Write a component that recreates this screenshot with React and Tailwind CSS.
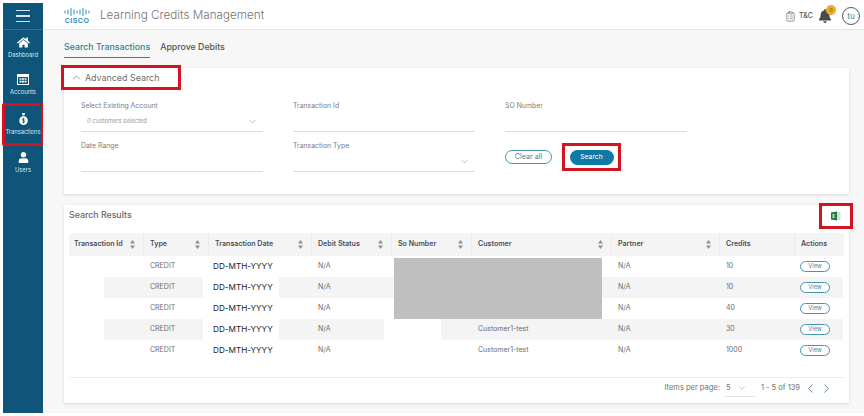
import React from "react";
import { FaHome, FaUser, FaBell } from "react-icons/fa";
import { ChevronDown, ChevronUp, ChevronLeft, ChevronRight, ClipboardList } from "lucide-react";

const Sort = () => (
  <svg width="5" height="9" viewBox="0 0 5 9" className="shrink-0 fill-[#8a9299]">
    <path d="M2.5 0 5 3.5H0z" />
    <path d="M2.5 9 0 5.5h5z" />
  </svg>
);

const CalendarIcon = () => (
  <svg width="12" height="11" viewBox="0 0 12 11" className="fill-white">
    <path d="M0 0h12v11H0z" />
    <path fill="#0e5579" d="M1 3h10v7H1z" />
    <path d="M2.5 4.2h2v1.6h-2zM5 4.2h2v1.6H5zM7.5 4.2h2v1.6h-2zM2.5 6.8h2v1.6h-2zM5 6.8h2v1.6H5zM7.5 6.8h2v1.6h-2z" />
  </svg>
);

const BagIcon = () => (
  <svg width="9" height="12" viewBox="0 0 9 12" className="fill-white">
    <path d="M3 0h3L5.400 2.200H3.600z" />
    <path d="M3.400 2.700h2.200v.7H3.400z" />
    <circle cx="4.500" cy="7.600" r="4.300" />
    <path fill="none" stroke="#0e5579" strokeWidth=".8" d="M5.800 6.200c-.5-.7-2.500-.8-2.500.3 0 1.200 2.500.7 2.500 2 0 1.100-2 1-2.600.3M4.500 4.800v5.500" />
  </svg>
);

const NavItem = ({ icon, label, active }) => (
  <div className={`flex flex-col items-center justify-center gap-[3px] ${active ? "-mx-[1px] -mb-[2px] h-[43px] w-[42px] shrink-0 border-[3px] border-[#d3131f] rounded-[2px]" : "h-[37px]"}`}>
    <div className="h-[12px] flex items-center justify-center">{icon}</div>
    <span className="text-[5.800px] leading-[8px] text-[#dbe6ec] whitespace-nowrap">{label}</span>
  </div>
);

const Field = ({ label, value, chevron }) => (
  <div className="w-[182px] h-[31px] flex flex-col">
    <span className="text-[6.900px] leading-[10px] text-[#7d7d7d]">{label}</span>
    <div className="mt-auto h-[21px] border-b border-[#dedede] flex items-center justify-between pl-[6px] pr-[5px]">
      <span className="text-[5.900px] italic text-[#9b9b9b]">{value}</span>
      {chevron && <ChevronDown size={11} strokeWidth={1} className="text-[#777]" />}
    </div>
  </div>
);

const cols = "grid grid-cols-[75px_65px_103px_80px_80px_140px_108px_75px_48px]";

const Head = ({ label, sort = true, first }) => (
  <div className={`flex items-center justify-between ${first ? "pl-[5px]" : "pl-[6px]"} pr-[8px] border-r border-[#eaeaea] last:border-r-0 text-[7.100px] font-semibold text-[#4a4f55] whitespace-nowrap`}>
    <span>{label}</span>
    {sort && <Sort />}
  </div>
);

const rows = [
  { credits: "10", customer: "" },
  { credits: "10", customer: "" },
  { credits: "40", customer: "" },
  { credits: "30", customer: "Customer1-test" },
  { credits: "1000", customer: "Customer1-test" },
];

const Row = ({ r, i }) => {
  const striped = i === 1 || i === 3;
  const stripe = striped ? "bg-[#f4f4f5]" : "";
  const cell = "flex items-center pl-[6px] text-[7px] text-[#6b6b6b]";
  return (
    <div className={`${cols} h-[21px]`}>
      <div className="grid grid-cols-[35px_40px]">
        <div />
        <div className={stripe} />
      </div>
      <div className="grid grid-cols-[59px_6px]">
        <div className={`${cell} ${stripe}`}>CREDIT</div>
        <div />
      </div>
      <div className="grid grid-cols-[70px_33px]">
        <div className="flex items-center pl-[4px] text-[8.200px] text-[#1a1a1a] whitespace-nowrap">DD-MTH-YYYY</div>
        <div className={stripe} />
      </div>
      <div className="grid grid-cols-[72px_8px]">
        <div className={`${cell} ${stripe}`}>N/A</div>
        <div className={i === 1 ? stripe : ""} />
      </div>
      <div className="grid grid-cols-[49px_31px]">
        <div className={i === 1 ? stripe : ""} />
        <div className={stripe} />
      </div>
      <div className={`${cell} ${stripe}`}>{r.customer}</div>
      <div className={`${cell} ${stripe}`}>N/A</div>
      <div className={`${cell} ${stripe}`}>{r.credits}</div>
      <div className={`flex items-center pl-[5px] ${stripe}`}>
        <span className="w-[30px] h-[11px] rounded-full border border-[#4a93ad] bg-white flex items-center justify-center text-[5.800px] text-[#3d89a4]">View</span>
      </div>
    </div>
  );
};

export default function App() {
  return (
    <div className="w-[864px] h-[416px] bg-white pt-[3px] pb-[3px] pl-[3px] flex overflow-hidden font-['Inter',sans-serif]">
      <aside className="w-[40px] bg-[#0e5579] flex flex-col items-stretch shrink-0">
        <div className="h-[27px] border-b border-[#2d6f8f] flex flex-col items-center justify-center gap-[4px] shrink-0">
          <div className="w-[14px] h-[1.300px] bg-[#d6e3ea]" />
          <div className="w-[14px] h-[1.300px] bg-[#d6e3ea]" />
          <div className="w-[14px] h-[1.300px] bg-[#d6e3ea]" />
        </div>
        <div className="flex flex-col -mt-[1px]">
          <NavItem icon={<FaHome size={13} className="text-white" />} label="Dashboard" />
          <NavItem icon={<CalendarIcon />} label="Accounts" />
          <NavItem icon={<BagIcon />} label="Transactions" active />
          <NavItem icon={<FaUser size={11} className="text-white" />} label="Users" />
        </div>
      </aside>
      <div className="flex-1 flex flex-col min-w-0">
        <header className="h-[27px] bg-white border-b border-[#e6e6e6] flex items-center pl-[21px] pr-[4px] shrink-0">
          <div className="flex flex-col items-center w-[26px]">
            <svg width="26" height="8" viewBox="0 0 26 8" className="stroke-[#2a8fb8]" strokeWidth="1" strokeLinecap="round">
              <path d="M1 3v2M4 2v4M7 .5v7M10 2v4M13 3v2M16 2v4M19 .5v7M22 2v4M25 3v2" />
            </svg>
            <span className="mt-[1px] text-[7px] leading-[7px] font-bold tracking-[0.5px] text-[#2a8fb8] font-['Liberation_Sans',sans-serif]">CISCO</span>
          </div>
          <span className="ml-[10px] text-[11.700px] font-light text-[#747474] whitespace-nowrap">Learning Credits Management</span>
          <div className="ml-auto flex items-center">
            <ClipboardList size={11} strokeWidth={1.5} className="-ml-[1px] text-[#666]" />
            <span className="ml-[3px] text-[7px] font-medium text-[#555]">T&amp;C</span>
            <div className="relative ml-[5px] w-[14px] h-[14px]">
              <FaBell size={14} className="text-[#4a4a4a]" />
              <span className="absolute -top-[4px] left-[8px] w-[10px] h-[10px] rounded-full bg-[#ecab2b] text-[5px] leading-[10px] text-center text-[#7a5200]">0</span>
            </div>
            <div className="ml-[10px] w-[18px] h-[18px] rounded-full border border-[#555] flex items-center justify-center text-[8px] text-[#2a7f96]">tu</div>
          </div>
        </header>
        <main className="flex-1 bg-[#f7f7f8] pl-[21px] pr-[15px] min-h-0 flex flex-col">
          <nav className="h-[28px] flex items-end gap-[10px] shrink-0">
            <div className="h-[27px] pt-[5px] border-b-[1.500px] border-[#2a8197] flex items-center text-[8.800px] font-medium text-[#2a8197] whitespace-nowrap">Search Transactions</div>
            <div className="h-[27px] pt-[5px] pb-[1.500px] flex items-center text-[8.800px] font-medium text-[#555] whitespace-nowrap">Approve Debits</div>
          </nav>
          <section className="mt-[10px] h-[126px] bg-white shadow-[0_1px_3px_rgba(0,0,0,0.12)] shrink-0 flex flex-col">
            <div className="-mt-[3px] -ml-[3px] w-[120px] h-[25px] border-[3px] border-[#d3131f] bg-white flex items-center pl-[6px] gap-[2px] shrink-0">
              <ChevronUp size={13} strokeWidth={1.1} className="text-[#555]" />
              <span className="text-[8.900px] text-[#6e6e6e] whitespace-nowrap">Advanced Search</span>
            </div>
            <div className="pl-[17px] pt-[11px] grid grid-cols-[182px_182px_auto] gap-x-[30px] gap-y-[9px] grid-rows-[31px_31px]">
              <Field label="Select Existing Account" value="0 customers selected" chevron />
              <Field label="Transaction Id" />
              <Field label="SO Number" />
              <Field label="Date Range" />
              <Field label="Transaction Type" chevron />
              <div className="flex items-start gap-[10px]">
                <button className="mt-[9px] w-[47px] h-[14px] rounded-full border border-[#4a93ad] text-[7.200px] text-[#4b7f92]">Clear all</button>
                <div className="mt-[2px] w-[59px] h-[28px] border-[3px] border-[#d3131f] flex items-center justify-center bg-white">
                  <button className="w-[44px] h-[15px] rounded-full bg-[#0f7aa5] text-[6.800px] text-white">Search</button>
                </div>
              </div>
            </div>
          </section>
          <section className="mt-[11px] h-[198px] bg-white shadow-[0_1px_3px_rgba(0,0,0,0.12)] shrink-0 flex flex-col pl-[5px] pr-[5px]">
            <div className="h-[28px] flex items-start justify-between shrink-0">
              <span className="mt-[5px] text-[8.800px] leading-[10px] text-[#666] font-medium">Search Results</span>
              <div className="-mr-[9px] -mt-[2px] w-[34px] h-[26px] border-[3px] border-[#d3131f] bg-white flex items-center justify-center">
                <svg width="10" height="10" viewBox="0 0 10 10">
                  <path fill="#cfe3d6" d="M4 1h5.500v8H4z" />
                  <path fill="#1f7a43" d="M0 1.500 6 .5v9l-6-1z" />
                  <path stroke="#fff" strokeWidth=".8" d="m1.500 3 2 4m0-4-2 4" />
                </svg>
              </div>
            </div>
            <div className="relative">
              <div className={`${cols} h-[23px] bg-[#f4f4f5]`}>
                <Head label="Transaction Id" first />
                <Head label="Type" />
                <Head label="Transaction Date" />
                <Head label="Debit Status" />
                <Head label="So Number" />
                <Head label="Customer" />
                <Head label="Partner" />
                <Head label="Credits" sort={false} />
                <Head label="Actions" sort={false} />
              </div>
              {rows.map((r, i) => <Row key={i} r={r} i={i} />)}
              <div className="absolute left-[325px] top-[25px] w-[208px] h-[61px] bg-[#bfbfbf]" />
            </div>
            <div className="mt-[16px] border-t border-[#ececec] h-[21px] flex items-center justify-end pr-[10px] text-[7.500px] text-[#6f6f6f]">
              <span>Items per page:</span>
              <div className="ml-[5px] w-[30px] flex items-center gap-[7px] border-b border-[#e4e4e4] h-[17px]">
                <span className="pl-[1px]">5</span>
                <ChevronDown size={10} strokeWidth={1} />
              </div>
              <span className="ml-[6px]">1 - 5 of 139</span>
              <ChevronLeft size={15} strokeWidth={1.2} className="ml-[3px] text-[#2f6478]" />
              <ChevronRight size={15} strokeWidth={1.2} className="ml-[1px] text-[#2f6478]" />
            </div>
          </section>
        </main>
      </div>
    </div>
  );
}
